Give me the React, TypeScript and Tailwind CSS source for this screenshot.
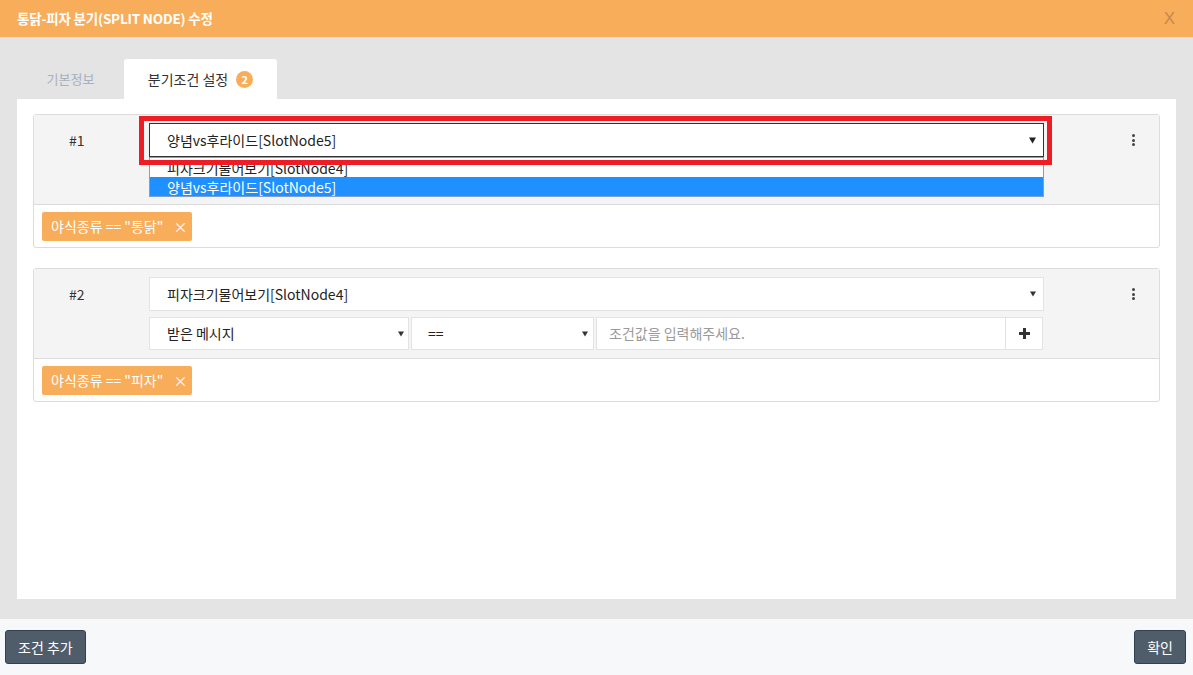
import React from "react";

const FONT = { fontFamily: '"Noto Sans CJK KR", "Noto Sans", sans-serif' };

function Arrow({ big }: { big?: boolean }) {
  return big ? (
    <svg width="7" height="7" viewBox="0 0 7 7">
      <polygon points="0,0.5 7,0.5 3.5,6.5" fill="#222" />
    </svg>
  ) : (
    <svg width="6" height="6" viewBox="0 0 6 6">
      <polygon points="0,0.5 6,0.5 3,5.5" fill="#333" />
    </svg>
  );
}

function Kebab() {
  return (
    <div className="flex flex-col items-center gap-[1.5px]">
      <span className="block w-[3px] h-[3px] rounded-full bg-[#444]" />
      <span className="block w-[3px] h-[3px] rounded-full bg-[#444]" />
      <span className="block w-[3px] h-[3px] rounded-full bg-[#444]" />
    </div>
  );
}

function Chip({ text }: { text: string }) {
  return (
    <div className="inline-flex items-center h-[29px] bg-[#f8ad5a] rounded-[2px] pl-[9px] pr-[5px] text-white text-[14px]">
      <span>{text}</span>
      <span className="ml-[10px] text-[14px] leading-none">×</span>
    </div>
  );
}

export default function App() {
  return (
    <div className="w-[1193px] h-[675px] flex flex-col overflow-hidden" style={FONT}>
      {/* Header */}
      <div className="h-[37px] bg-[#f8ad5a] flex items-center justify-between pl-[17px] pr-[18px]">
        <span className="text-white font-bold text-[13.5px] tracking-[-0.2px]">통닭-피자 분기(SPLIT NODE) 수정</span>
        <span className="text-[#c48a4c] text-[17px] leading-none" style={{ fontFamily: '"Liberation Sans", sans-serif' }}>X</span>
      </div>

      {/* Body */}
      <div className="flex-1 bg-[#e4e4e4] px-[17px] pt-[22px] pb-[20px] flex flex-col">
        {/* Tabs */}
        <div className="flex h-[40px]">
          <div className="w-[107px] flex items-center justify-center text-[13px] text-[#a8b0be]">기본정보</div>
          <div className="w-[153px] bg-white rounded-t-[3px] flex items-center justify-center text-[14px] text-[#333]">
            <span>분기조건 설정</span>
            <span className="ml-[8px] w-[17px] h-[17px] rounded-full bg-[#f8ad5a] text-white text-[11px] font-bold flex items-center justify-center">2</span>
          </div>
        </div>

        {/* Panel */}
        <div className="flex-1 bg-white px-[16px] pt-[15px] flex flex-col gap-[20px]">
          {/* Card 1 */}
          <div className="relative border border-[#dcdcdc] rounded-[3px]">
            <div className="bg-[#f4f4f4] h-[89px] flex items-start pt-[8px]">
              <div className="w-[115px] h-[34px] flex items-center pl-[35px] text-[14px] text-[#333]">#1</div>
              <div className="relative w-[895px]">
                <div className="h-[34px] bg-white border border-[#2d3339] flex items-center justify-between pl-[17px] pr-[7px] text-[14px] text-[#222]">
                  <span>양념vs후라이드[SlotNode5]</span>
                  <Arrow big />
                </div>
                <div className="absolute left-0 top-[34px] w-full border border-[#7f9fd0] bg-white z-10 flex flex-col text-[14px]">
                  <div className="h-[19px] flex items-center pl-[17px] text-[#222] leading-none">피자크기물어보기[SlotNode4]</div>
                  <div className="h-[19px] flex items-center pl-[17px] bg-[#1e90ff] text-white leading-none">양념vs후라이드[SlotNode5]</div>
                </div>
              </div>
              <div className="flex-1 h-[34px] flex items-center justify-end pr-[24px]">
                <Kebab />
              </div>
            </div>
            <div className="border-t border-[#dcdcdc] h-[43px] flex items-center pl-[8px]">
              <Chip text={'야식종류 == "통닭"'} />
            </div>
            {/* Red highlight overlay */}
            <div className="absolute left-[105px] top-[1px] w-[913px] h-[49px] border-[5px] border-[#ee1c25] z-20 pointer-events-none" />
          </div>

          {/* Card 2 */}
          <div className="border border-[#dcdcdc] rounded-[3px]">
            <div className="bg-[#f4f4f4] h-[89px] flex items-start pt-[8px]">
              <div className="w-[115px] h-[34px] flex items-center pl-[35px] text-[14px] text-[#333]">#2</div>
              <div className="w-[895px] flex flex-col gap-[6px]">
                <div className="h-[34px] bg-white border border-[#e3e3e3] flex items-center justify-between pl-[17px] pr-[7px] text-[14px] text-[#222]">
                  <span>피자크기물어보기[SlotNode4]</span>
                  <Arrow />
                </div>
                <div className="flex h-[33px] gap-[2px] pr-[1px]">
                  <div className="w-[260px] bg-white border border-[#e3e3e3] flex items-center justify-between pl-[17px] pr-[4px] text-[14px] text-[#222]">
                    <span>받은 메시지</span>
                    <Arrow />
                  </div>
                  <div className="w-[183px] bg-white border border-[#e3e3e3] flex items-center justify-between pl-[16px] pr-[5px] text-[14px] text-[#222]">
                    <span>==</span>
                    <Arrow />
                  </div>
                  <div className="flex-1 flex">
                    <div className="flex-1 bg-white border border-[#e3e3e3] flex items-center pl-[12px] text-[14px] text-[#9a9a9a]">
                      조건값을 입력해주세요.
                    </div>
                    <div className="w-[37px] bg-white border border-l-0 border-[#e3e3e3] flex items-center justify-center">
                      <svg width="11" height="11" viewBox="0 0 11 11">
                        <rect x="4" y="0" width="3" height="11" fill="#333" />
                        <rect x="0" y="4" width="11" height="3" fill="#333" />
                      </svg>
                    </div>
                  </div>
                </div>
              </div>
              <div className="flex-1 h-[34px] flex items-center justify-end pr-[24px]">
                <Kebab />
              </div>
            </div>
            <div className="border-t border-[#dcdcdc] h-[43px] flex items-center pl-[8px]">
              <Chip text={'야식종류 == "피자"'} />
            </div>
          </div>
        </div>
      </div>

      {/* Footer */}
      <div className="h-[56px] bg-[#f7f8fa] flex items-center justify-between pl-[5px] pr-[7px]">
        <button className="h-[34px] px-[12px] bg-[#4f5d6b] border border-[#33404d] rounded-[3px] text-white text-[14px]">조건 추가</button>
        <button className="h-[34px] px-[12px] bg-[#4f5d6b] border border-[#33404d] rounded-[3px] text-white text-[14px]">확인</button>
      </div>
    </div>
  );
}
